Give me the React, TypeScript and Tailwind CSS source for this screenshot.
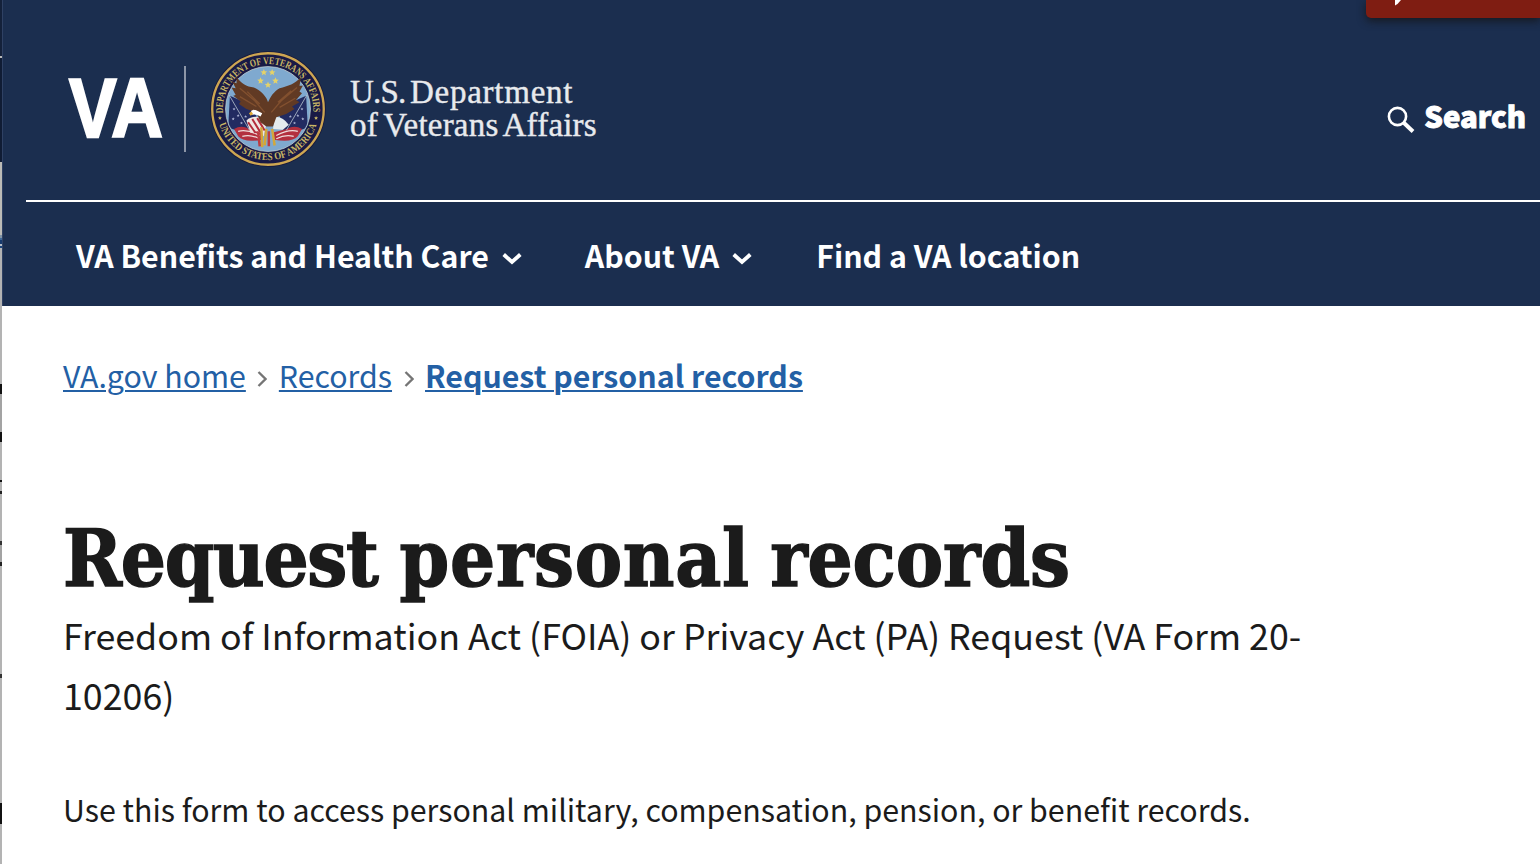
import React from "react";

const edge: [number, string][] = [
  [56, "bg-[#14213a]"], [2, "bg-[#b9b9b9]"], [104, "bg-[#101c34]"], [73, "bg-[#bcbbb6]"],
  [3, "bg-[#7f93a6]"], [2, "bg-[#3f6796]"], [4, "bg-[#173a6e]"], [2, "bg-[#b8c0ca]"], [2, "bg-[#1d467f]"],
  [136, "bg-[#b3b3b3]"], [10, "bg-[#111]"], [38, "bg-[#a3a3a3]"], [10, "bg-[#111]"], [38, "bg-[#b3b3b3]"],
  [2, "bg-[#111]"], [9, "bg-[#b3b3b3]"], [3, "bg-[#222]"], [47, "bg-[#b3b3b3]"], [4, "bg-[#333]"],
  [17, "bg-[#a3a3a3]"], [4, "bg-[#222]"], [108, "bg-[#b3b3b3]"], [4, "bg-[#333]"], [125, "bg-[#b3b3b3]"],
  [21, "bg-[#111]"], [40, "bg-[#b3b3b3]"],
];

function Star({ x, y, r = 3, fill }: { x: number; y: number; r?: number; fill: string }) {
  const pts = Array.from({ length: 10 }, (_, i) => {
    const a = -Math.PI / 2 + (i * Math.PI) / 5;
    const q = i % 2 ? r * 0.45 : r;
    return `${x + q * Math.cos(a)},${y + q * Math.sin(a)}`;
  }).join(" ");
  return <polygon points={pts} fill={fill} />;
}

function Seal() {
  return (
    <svg width="116" height="116" viewBox="0 0 140 140" className="block shrink-0">
      <defs>
        <path id="top" d="M 15.700 75 A 54.500 54.500 0 1 1 124.300 75" />
        <path id="bot" d="M 11 88 A 61.700 61.700 0 0 0 129 88" />
        <clipPath id="sky"><circle cx="70" cy="70" r="50.500" /></clipPath>
      </defs>
      <circle cx="70" cy="70" r="69.800" fill="#17183c" />
      <circle cx="70" cy="70" r="67.300" fill="#191a45" stroke="#cda652" strokeWidth="2.800" />
      <circle cx="70" cy="70" r="51.200" fill="#7fa9cf" stroke="#b9c6cc" strokeWidth="1" />
      <g clipPath="url(#sky)">
        <path d="M24 54 L22 92 Q36 99 52 96 L56 78 L42 62 Z" fill="#222b61" />
        <path d="M116 54 L118 92 Q104 99 88 96 L84 78 L98 62 Z" fill="#222b61" />
        <path d="M29 94 q9-5 18 0 l16 4 v9 q-22 4-29-4Z M111 94 q-9-5-18 0 l-16 4 v9 q22 4 29-4Z" fill="#b3303f" />
        <path d="M34 97 q11-3 26 5 M39 103 q10-3 21 3 M106 97 q-11-3-26 5 M101 103 q-10-3-21 3" stroke="#eedcdc" strokeWidth="1.500" fill="none" />
      </g>
      <path d="M23 53 L48 96 M117 53 L92 96" stroke="#b4bfcc" strokeWidth="1" />
      {[[29, 70], [34, 78], [28, 82], [38, 87], [43, 79], [111, 70], [106, 78], [112, 82], [102, 87], [97, 79]].map(([x, y]) => <Star key={`${x}-${y}`} x={x} y={y} r={1.900} fill="#aab2d2" />)}
      <path d="M44 84 Q50 78 60 80 L68 88 L65 103 L57 97 L49 99 Z" fill="#efe6e2" />
      <path d="M46 86 l9 13 M51 82 l11 18 M57 81 l9 15" stroke="#b32c3a" strokeWidth="2.400" />
      <path d="M78 80 Q87 78 95 89 L88 95 L76 94 Z" fill="#e4ebee" />
      <path d="M62 92 l1 24 M68 94 l-2 20 M75 94 l3 20" stroke="#d3a73a" strokeWidth="3" />
      <path d="M58 97 l2 18 M71 97 l0 18" stroke="#bb3c42" strokeWidth="3" />
      <path d="M70 62 C69 56 61 47 53 44 C44 43 37 39 32 31 L32 39 L27 37 L31 45 L26 44 L31 53 L28 54 L37 61 L35 64 L44 70 L56 74 L61 86 L68 91 L76 91 L80 80 L92 76 L102 70 L99 67 L108 62 L104 59 L111 51 L108 49 L112 42 L108 42 L110 31 C103 40 94 42 84 45 C77 49 73 55 70 62Z" fill="#613a24" />
      <path d="M36 45 L54 60 L66 74 M45 49 L60 64 M36 55 L56 67 M105 44 L86 60 L74 74 M98 48 L82 62 M103 57 L84 68" stroke="#82502f" strokeWidth="1.600" fill="none" />
      <path d="M57 72 Q50 69 49 74 L51 77 Q56 76 61 79 L63 75Z" fill="#fff" />
      <path d="M50 73 l-3 2 2 3 3-2Z" fill="#e1ab37" />
      {[[65, 26], [75, 26], [61, 36], [79, 36], [70, 41]].map(([x, y]) => <Star key={`${x}-${y}`} x={x} y={y} r={4.200} fill="#e6d267" />)}
      <g fill="#c9b765" fontFamily="Liberation Serif" fontWeight="700" fontSize="12.500">
        <text><textPath href="#top" textLength="179" lengthAdjust="spacingAndGlyphs">DEPARTMENT OF VETERANS AFFAIRS</textPath></text>
        <text><textPath href="#bot" textLength="156" lengthAdjust="spacingAndGlyphs">UNITED STATES OF AMERICA</textPath></text>
      </g>
      <Star x={12} y={81} r={2.500} fill="#c9b765" />
      <Star x={128} y={81} r={2.500} fill="#c9b765" />
    </svg>
  );
}

function Chevron() {
  return (
    <svg width="20" height="13" viewBox="0 0 20 13" className="mt-1.5 shrink-0">
      <path d="M1.700 2.500 L10 10 L18.300 2.500" fill="none" stroke="white" strokeWidth="3.800" />
    </svg>
  );
}

function Crumb() {
  return (
    <svg width="10" height="16" viewBox="0 0 10 16" className="mt-2 shrink-0">
      <path d="M1.500 1 L8.500 8 L1.500 15" fill="none" stroke="#757575" strokeWidth="2.300" />
    </svg>
  );
}

export default function App() {
  return (
    <div className="flex h-[864px] w-[1540px] overflow-hidden bg-white font-['Noto_Sans_CJK_SC','Open_Sans',sans-serif] text-[#1b1b1b]">
      <div className="flex w-[2px] shrink-0 flex-col">
        {edge.map(([h, c], i) => <div key={i} className={`w-full shrink-0 ${c}`} style={{ height: h }} />)}
      </div>
      <div className="min-w-0 flex-1">
        <header className="relative h-[306px] border-l border-[#2f4164] bg-[#1b2e4f] text-white">
          <div className="absolute right-0 top-0 h-[18px] w-[174px] rounded-bl-[5px] bg-[#7f1d12] shadow-[0_3px_8px_rgba(20,20,20,0.800)]">
            <svg width="8" height="6" viewBox="0 0 8 6" className="ml-7 block"><path d="M1 0 H7 L3.500 4 L1 5.500Z" fill="white" /></svg>
          </div>
          <div className="flex h-[200px] items-center pl-[66px] pt-[18px]">
            <div className="h-[87px] w-[93px] font-['Liberation_Sans',sans-serif] text-[84px] font-bold leading-[84px]">
              <span className="inline-block origin-left scale-x-[0.850] [-webkit-text-stroke:2.400px_white]">VA</span>
            </div>
            <div className="ml-[22px] h-[86px] w-[2px] bg-[#8d96a7]" />
            <div className="ml-[24px]"><Seal /></div>
            <div className="ml-[24px] whitespace-nowrap font-['Liberation_Serif',serif] text-[33px] leading-[33px] text-[#e8eaed] [-webkit-text-stroke:0.400px_#e8eaed]">
              <div><span className="tracking-[-0.800px]">U.S. </span><span className="-ml-[3px] tracking-[0.750px]">Department</span></div>
              <div className="tracking-[0.200px] [word-spacing:-2.500px]">of Veterans Affairs</div>
            </div>
            <div className="ml-auto flex items-center pr-[14px] pt-[11px]">
              <svg width="28" height="28" viewBox="0 0 28 28" className="mt-[10px]"><circle cx="10.500" cy="10.500" r="8.600" fill="none" stroke="white" strokeWidth="2.600" /><path d="M16.500 16.500 L26 25.500" stroke="white" strokeWidth="4" /></svg>
              <span className="ml-[9px] text-[29.300px] font-black leading-[40px] [-webkit-text-stroke:0.900px_white]">Search</span>
            </div>
          </div>
          <div className="ml-[23px] h-[2px] bg-white" />
          <nav className="flex items-center whitespace-nowrap pl-[73px] pt-[33px] text-[30.300px] font-bold leading-[40px]">
            <span>VA Benefits and Health Care</span><span className="ml-[13px]"><Chevron /></span>
            <span className="ml-[63px]">About VA</span><span className="ml-[13px]"><Chevron /></span>
            <span className="ml-[64px]">Find a VA location</span>
          </nav>
        </header>
        <main className="pl-[61px]">
          <div className="flex items-center whitespace-nowrap pt-[49px] text-[30.300px] leading-[40px] text-[#2360a5]">
            <a className="underline decoration-2 underline-offset-[2px]">VA.gov home</a>
            <span className="ml-[11px] mr-[12px]"><Crumb /></span>
            <a className="underline decoration-2 underline-offset-[2px]">Records</a>
            <span className="ml-[12px] mr-[11px]"><Crumb /></span>
            <a className="font-bold underline decoration-2 underline-offset-[2px]">Request personal records</a>
          </div>
          <h1 className="mt-[114px] h-[100px] whitespace-nowrap font-['DejaVu_Serif',serif] text-[79px] font-bold leading-[100px] [-webkit-text-stroke:1.400px_#1b1b1b] [font-stretch:condensed] [word-spacing:-5px]">
            <span className="tracking-[-1.300px]">Request</span><span className="tracking-[2.300px]"> </span><span className="tracking-[0.700px]">personal </span><span className="tracking-[-0.100px]">records</span>
          </h1>
          <p className="-mt-[5px] whitespace-nowrap text-[35.780px] leading-[60px]">Freedom of Information Act (FOIA) or Privacy Act (PA) Request (VA Form 20-<br />10206)</p>
          <p className="mt-[65px] whitespace-nowrap text-[30.330px] leading-[40px]">Use this form to access personal military, compensation, pension, or benefit records.</p>
        </main>
      </div>
    </div>
  );
}
